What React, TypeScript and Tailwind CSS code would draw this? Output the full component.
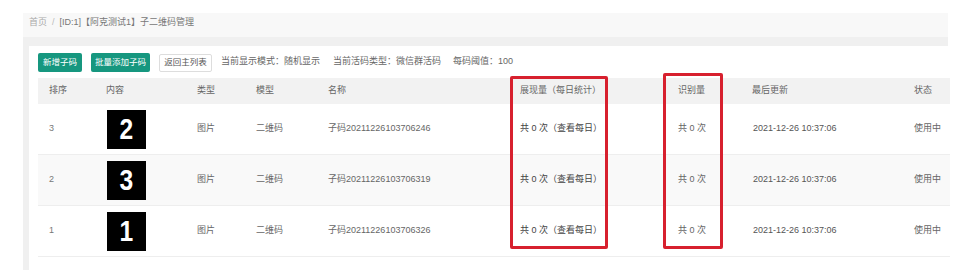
import React from 'react';

interface Row {
  sort: number;
  digit: string;
  name: string;
}

const rows: Row[] = [
  { sort: 3, digit: '2', name: '子码20211226103706246' },
  { sort: 2, digit: '3', name: '子码20211226103706319' },
  { sort: 1, digit: '1', name: '子码20211226103706326' },
];

const cols = 'grid grid-cols-[57px_91px_59px_72px_192px_158px_74px_162px_47px]';

const App: React.FC = () => {
  return (
    <div
      className="relative w-[957px] h-[270px] overflow-hidden bg-white pt-[13px] pl-[23px] pr-[9px] text-[9px] text-[#666]"
      style={{ fontFamily: '"Liberation Sans", "Noto Sans CJK SC", sans-serif' }}
    >
      <div className="h-full bg-[#f0f0f0] flex flex-col">
        {/* Breadcrumb */}
        <div className="h-[24px] bg-[#f8f8f8] pl-[6px] pt-[3px] flex items-start">
          <span className="text-[#aaa]">首页</span>
          <span className="text-[#bbb] mx-[5px]">/</span>
          <span className="text-[#777]">[ID:1]【阿克测试1】子二维码管理</span>
        </div>

        {/* Card */}
        <div className="mt-[9px] ml-[6px] flex-1 bg-white pl-[9px] pt-[6px]">
          {/* Toolbar */}
          <div className="flex items-center h-[20px]">
            <button className="w-[44px] h-[19px] bg-[#16977f] text-white text-[8.5px] rounded-[2px]">
              新增子码
            </button>
            <button className="ml-[9px] w-[59px] h-[19px] bg-[#16977f] text-white text-[8.5px] rounded-[2px]">
              批量添加子码
            </button>
            <button className="ml-[9px] w-[53px] h-[18px] mt-[1px] bg-white border border-[#ddd] text-[#555] text-[8.5px] rounded-[2px]">
              返回主列表
            </button>
            <span className="ml-[9px] text-[#666]">当前显示模式：随机显示</span>
            <span className="ml-[13px] text-[#666]">当前活码类型：微信群活码</span>
            <span className="ml-[12px] text-[#666]">每码阈值：100</span>
          </div>

          {/* Table */}
          <div className="mt-[6px] w-[912px]">
            <div className={`${cols} h-[26px] items-center bg-[#f2f2f2] text-[#666]`}>
              <div className="pl-[11px]">排序</div>
              <div className="pl-[11px]">内容</div>
              <div className="pl-[11px]">类型</div>
              <div className="pl-[11px]">模型</div>
              <div className="pl-[11px]">名称</div>
              <div className="pl-[11px]">展现量（每日统计）</div>
              <div className="pl-[11px]">识别量</div>
              <div className="pl-[11px]">最后更新</div>
              <div className="pl-[11px]">状态</div>
            </div>
            {rows.map((row, i) => (
              <div
                key={row.sort}
                className={`${cols} h-[51px] items-center border-b border-[#eeeeee] ${
                  i === 1 ? 'bg-[#f9f9f9]' : 'bg-white'
                }`}
              >
                <div className="pl-[11px] text-[#777]">{row.sort}</div>
                <div className="pl-[12px]">
                  <div className="w-[39px] h-[39px] bg-black flex items-center justify-center text-white">
                    <span className="inline-block text-[30px] font-bold leading-none scale-x-[0.82]">
                      {row.digit}
                    </span>
                  </div>
                </div>
                <div className="pl-[11px]">图片</div>
                <div className="pl-[11px]">二维码</div>
                <div className="pl-[11px]">{row.name}</div>
                <div className="pl-[11px] text-[#444]">共 0 次（查看每日）</div>
                <div className="pl-[11px]">共 0 次</div>
                <div className="pl-[12px] text-[#555]">2021-12-26 10:37:06</div>
                <div className="pl-[11px]">使用中</div>
              </div>
            ))}
          </div>
        </div>
      </div>

      {/* Highlight boxes */}
      <div className="absolute left-[510px] top-[76px] w-[98px] h-[173px] border-[3px] border-[#d7202e] rounded-[2px]" />
      <div className="absolute left-[663px] top-[73px] w-[60px] h-[176px] border-[3px] border-[#d7202e] rounded-[2px]" />
    </div>
  );
};

export default App;
